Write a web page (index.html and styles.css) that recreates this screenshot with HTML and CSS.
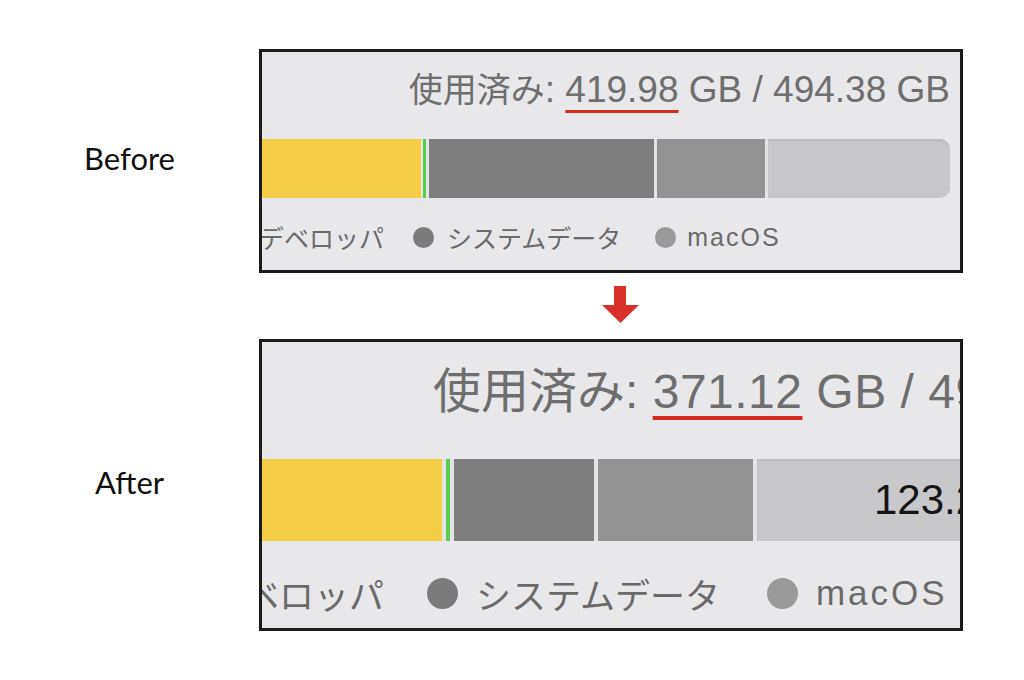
FILE: index.html
```html
<!DOCTYPE html>
<html lang="ja">
<head>
<meta charset="utf-8">
<title>Before / After</title>
<link rel="stylesheet" href="styles.css">
</head>
<body>
<div class="page">
  <div class="label">Before</div>
  <div class="panel p1">
    <div class="usage"><span class="ja">使用済み</span>: <span class="mark">419.98</span> GB / 494.38 GB</div>
    <div class="bar">
      <div class="seg yellow"></div>
      <div class="seg green"></div>
      <div class="seg dark"></div>
      <div class="seg mid"></div>
      <div class="seg light"></div>
    </div>
    <div class="legend">
      <span class="cut">デベロッパ</span>
      <span class="dot dot-dark"></span><span class="item">システムデータ</span>
      <span class="dot dot-mid"></span><span class="item latin">macOS</span>
    </div>
  </div>

  <div class="arrow-row">
    <svg class="arrow" width="37" height="37" viewBox="0 0 37 37" aria-hidden="true">
      <rect x="12" y="0" width="12" height="20" fill="#d9302a"/>
      <polygon points="0,19 37,19 18.5,37" fill="#d9302a"/>
    </svg>
  </div>

  <div class="label">After</div>
  <div class="panel p2">
    <div class="usage"><span class="ja">使用済み</span>: <span class="mark">371.12</span> GB / 494.38 GB</div>
    <div class="bar">
      <div class="seg yellow"></div>
      <div class="seg green"></div>
      <div class="seg dark"></div>
      <div class="seg mid"></div>
      <div class="seg light"><span class="free">123.26 GB</span></div>
    </div>
    <div class="legend">
      <span class="cut">デベロッパ</span>
      <span class="dot dot-dark"></span><span class="item">システムデータ</span>
      <span class="dot dot-mid"></span><span class="item latin">macOS</span>
    </div>
  </div>
</div>
</body>
</html>
```

FILE: styles.css
```css
* { box-sizing: border-box; }

html, body {
  margin: 0;
  padding: 0;
  background: #ffffff;
}

body {
  width: 1024px;
  height: 680px;
  overflow: hidden;
  font-family: "Liberation Sans", Arial, "Noto Sans CJK JP", sans-serif;
}

.page {
  display: grid;
  grid-template-columns: 259px 704px;
  grid-template-rows: 224px 66px 292px;
  padding-top: 49px;
}

.label {
  display: flex;
  align-items: center;
  justify-content: center;
  font-family: Lato, "Open Sans", sans-serif;
  font-size: 31px;
  color: #111111;
  padding-bottom: 6px;
}

.panel {
  border: 3px solid #1b1b1b;
  background: #e8e8ea;
  overflow: hidden;
  color: #6e6e6e;
}

.ja {
  font-family: "Noto Sans CJK JP", sans-serif;
}

.usage {
  white-space: nowrap;
}

.mark {
  text-decoration: underline;
  text-decoration-color: #d52a22;
  text-decoration-skip-ink: none;
}

.bar {
  display: flex;
  background: #e4e4e6;
}

.seg { flex: none; }
.yellow { background: #f6cd46; }
.green { background: #5acd4e; }
.dark { background: #7e7e7e; }
.mid { background: #939393; }
.light {
  background: #c8c8cb;
  box-shadow: inset 0 2px 2px rgba(0, 0, 0, 0.06);
}

.legend {
  display: flex;
  align-items: center;
  white-space: nowrap;
  font-family: "Noto Sans CJK JP", sans-serif;
  color: #6a6a6a;
}

.cut {
  flex: none;
  width: 122px;
  overflow: hidden;
  display: flex;
  justify-content: flex-end;
}

.latin {
  font-family: "Liberation Sans", Arial, sans-serif;
}

.dot {
  flex: none;
  border-radius: 50%;
}
.dot-dark { background: #7b7b7b; }
.dot-mid { background: #9a9a9a; }

/* ---------- Before ---------- */
.p1 .usage {
  margin-top: 16px;
  height: 40px;
  line-height: 40px;
  font-size: 37px;
  text-align: right;
  padding-right: 10px;
}
.p1 .ja { font-size: 34px; }
.p1 .mark {
  text-decoration-thickness: 3px;
  text-underline-offset: 8px;
}

.p1 .bar {
  margin-top: 31px;
  height: 59px;
  width: 688px;
  border-radius: 0 10px 10px 0;
}
.p1 .yellow { width: 159px; }
.p1 .green { width: 3px; margin-left: 2px; }
.p1 .dark { width: 225px; margin-left: 3px; }
.p1 .mid { width: 108px; margin-left: 3px; }
.p1 .light { width: 182px; margin-left: 3px; border-radius: 0 10px 10px 0; }

.p1 .legend {
  margin-top: 19px;
  height: 40px;
  font-size: 25px;
}
.p1 .dot { width: 21px; height: 21px; }
.p1 .dot-dark { margin-left: 29px; }
.p1 .dot-mid { margin-left: 34px; }
.p1 .item { margin-left: 13px; }
.p1 .latin { margin-left: 11px; letter-spacing: 2px; }

/* ---------- After ---------- */
.p2 .usage {
  margin-top: 18px;
  height: 54px;
  line-height: 54px;
  font-size: 48px;
  letter-spacing: 0.5px;
  padding-left: 171px;
}
.p2 .ja { font-size: 48px; letter-spacing: 0; }
.p2 .mark {
  text-decoration-thickness: 4px;
  text-underline-offset: 8px;
}

.p2 .bar {
  margin-top: 45px;
  height: 82px;
}
.p2 .yellow { width: 180px; }
.p2 .green { width: 4px; margin-left: 4px; }
.p2 .dark { width: 140px; margin-left: 4px; }
.p2 .mid { width: 155px; margin-left: 4px; }
.p2 .light {
  width: 400px;
  margin-left: 4px;
  display: flex;
  align-items: center;
  padding-left: 117px;
}
.free {
  font-family: "Liberation Sans", Arial, sans-serif;
  font-size: 42px;
  color: #151515;
  white-space: nowrap;
}

.p2 .legend {
  margin-top: 27px;
  height: 50px;
  font-size: 35px;
}
.p2 .dot { width: 31px; height: 31px; }
.p2 .dot-dark { margin-left: 43px; }
.p2 .dot-mid { margin-left: 47px; }
.p2 .item { margin-left: 18px; }
.p2 .latin { margin-left: 18px; letter-spacing: 3px; }

/* ---------- Arrow ---------- */
.arrow-row {
  grid-column: 2;
  padding-top: 13px;
  padding-left: 343px;
}
.arrow { display: block; }
```
